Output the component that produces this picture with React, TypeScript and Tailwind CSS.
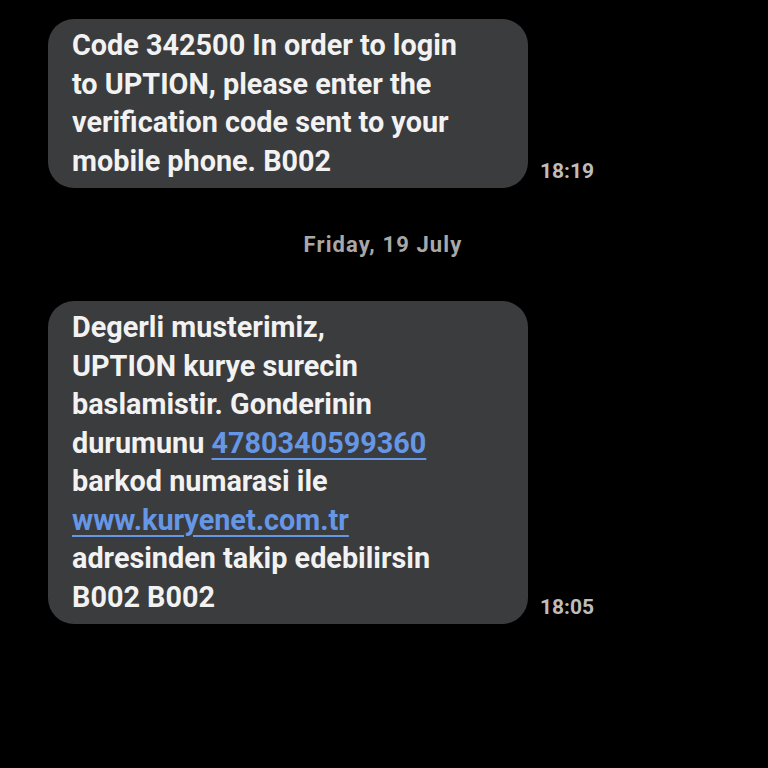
const bubble =
  "w-[480px] rounded-[26px] bg-[#3b3c3e] pl-6 pr-4 text-[28.8px] font-bold leading-[38.5px] text-[#f2f2f2]";
const time = "pb-[3px] text-[21px] leading-[28px] font-bold text-[#bdbdbd]";

function Line({ children }: { children: React.ReactNode }) {
  return <div className="whitespace-nowrap">{children}</div>;
}

function Link({ children }: { children: React.ReactNode }) {
  return (
    <span className="text-[#6697e6] underline decoration-2 underline-offset-[5px]">{children}</span>
  );
}

export default function App() {
  return (
    <div
      className="flex h-[768px] w-[768px] flex-col bg-black pl-12 pt-[19px]"
      style={{ fontFamily: "Roboto, 'Noto Sans', sans-serif" }}
    >
      <div className="flex items-end gap-3">
        <div className={`${bubble} pt-[7px] pb-[8px]`}>
          <Line>Code 342500 In order to login</Line>
          <Line>to UPTION, please enter the</Line>
          <Line>verification code sent to your</Line>
          <Line>mobile phone. B002</Line>
        </div>
        <span className={`${time} pb-[1px]`}>18:19</span>
      </div>

      <div className="flex h-[113px] items-center justify-center pr-[50px] text-[22px] font-bold tracking-[0.05em] text-[#a8a8a8]">
        Friday, 19 July
      </div>

      <div className="flex items-end gap-3">
        <div className={`${bubble} pt-[7px] pb-[8px]`}>
          <Line>Degerli musterimiz,</Line>
          <Line>UPTION kurye surecin</Line>
          <Line>baslamistir. Gonderinin</Line>
          <Line>
            durumunu <Link>4780340599360</Link>
          </Line>
          <Line>barkod numarasi ile</Line>
          <Line>
            <Link>www.kuryenet.com.tr</Link>
          </Line>
          <Line>adresinden takip edebilirsin</Line>
          <Line>B002 B002</Line>
        </div>
        <span className={time}>18:05</span>
      </div>
    </div>
  );
}
